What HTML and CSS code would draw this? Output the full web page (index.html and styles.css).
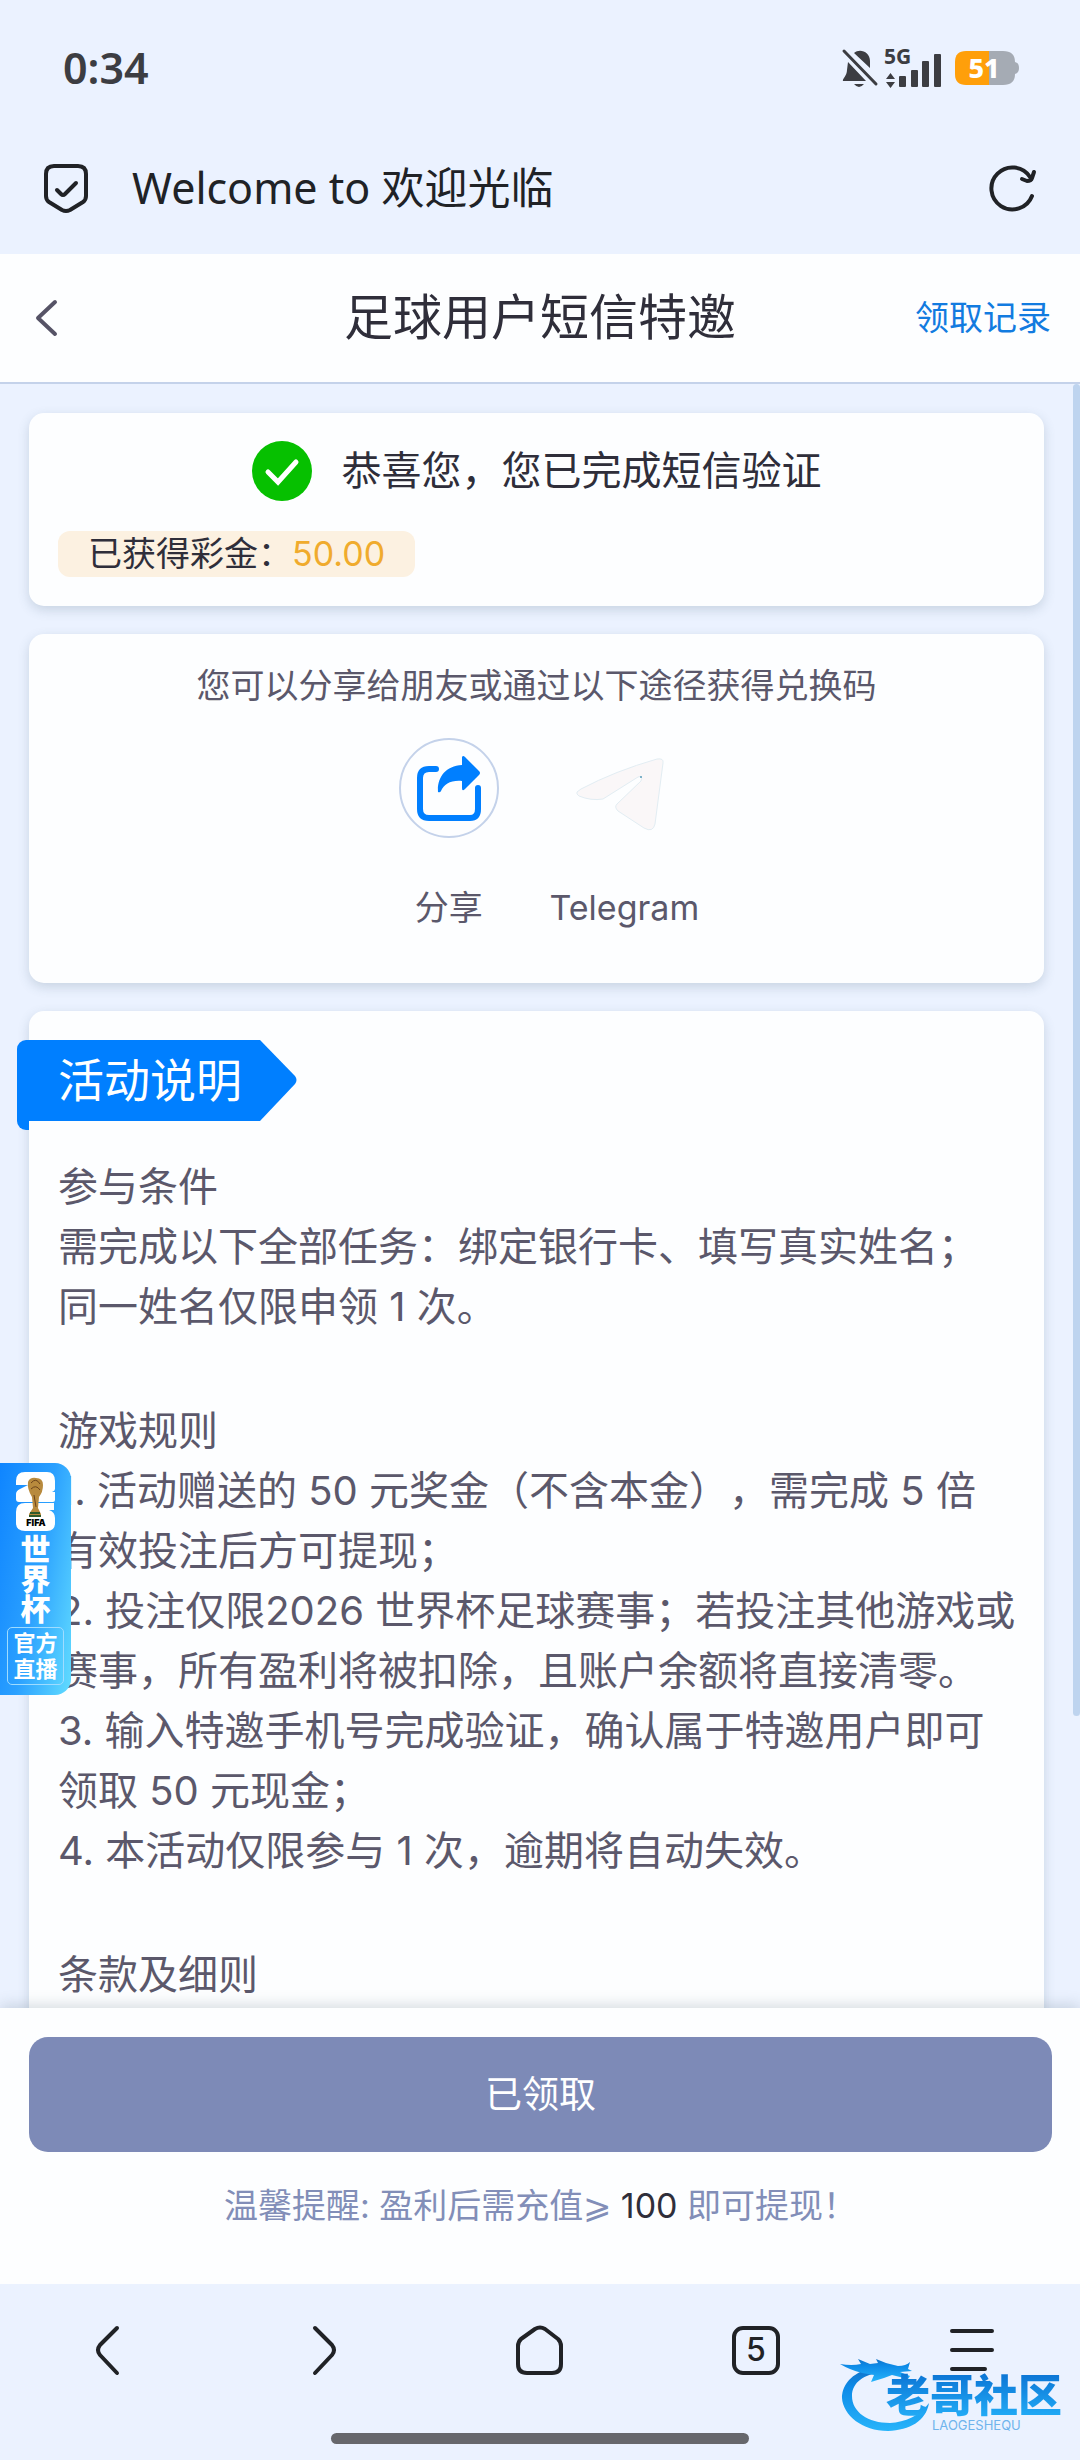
FILE: index.html
```html
<!DOCTYPE html>
<html lang="zh-CN">
<head>
<meta charset="utf-8">
<meta name="viewport" content="width=device-width, initial-scale=1.0">
<title>足球用户短信特邀</title>
<link rel="stylesheet" href="styles.css">
</head>
<body>
<div class="status-bar">
  <span class="clock">0:34</span>
  <div class="status-icons">
    <svg class="bell" width="36" height="40" viewBox="0 0 36 40">
      <path d="M12 5 C18 0 28 4 28 13 V20 Z M6 14 L24 33 H1 C0 31 5 28 5 22 Z M12 36 H22 Q17 42 12 36 Z" fill="#3c3d42"/>
      <path d="M2 3 L34 36" stroke="#3c3d42" stroke-width="3" stroke-linecap="round"/>
    </svg>
    <svg class="signal" width="58" height="40" viewBox="0 0 58 40" fill="#3c3d42">
      <text x="0" y="16" class="net-type">5G</text>
      <path d="M2 31 L6.500 25 L11 31 Z M2 34 H11 L6.500 40 Z"/>
      <rect x="15" y="28" width="7" height="11" rx="1"/>
      <rect x="27" y="22" width="7" height="17" rx="1"/>
      <rect x="38" y="13" width="7" height="26" rx="1"/>
      <rect x="50" y="6" width="7" height="33" rx="1"/>
    </svg>
    <svg class="battery" width="64" height="34" viewBox="0 0 64 34">
      <path d="M33 0 H48 Q60 0 60 11 Q64 12 64 17 Q64 22 60 23 Q60 34 48 34 H33 Z" fill="#a5abb4"/>
      <path d="M34 0 H11 Q0 0 0 11 V23 Q0 34 11 34 H34 Z" fill="#ff9f0a"/>
      <text x="29" y="27" class="battery-level">51</text>
    </svg>
  </div>
</div>

<div class="browser-bar">
  <svg width="46" height="50" viewBox="0 0 46 50" fill="none" stroke="#202226" stroke-width="4" stroke-linecap="round" stroke-linejoin="round">
    <path d="M11 3 H35 Q43 3 43 11 V33 Q43 37 40 39 L27 47 Q23 49 19 47 L6 39 Q3 37 3 33 V11 Q3 3 11 3 Z"/>
    <path d="M14 27 L18 31 Q20 33 22 31 L33 20"/>
  </svg>
  <span class="site-title">Welcome to 欢迎光临</span>
  <button class="icon-btn" aria-label="刷新">
    <svg width="48" height="48" viewBox="0 0 48 48" fill="none" stroke="#202226" stroke-width="4" stroke-linecap="round" stroke-linejoin="round">
      <path d="M43 32 A21 21 0 1 1 41 13"/>
      <path d="M33 15 L38 17 Q42 17 43 14 L45 8"/>
    </svg>
  </button>
</div>

<header class="page-header">
  <button class="icon-btn" aria-label="返回">
    <svg width="24" height="36" viewBox="0 0 24 36" fill="none" stroke="#565366" stroke-width="4" stroke-linecap="round" stroke-linejoin="round">
      <path d="M20 2 L3 18 L20 34"/>
    </svg>
  </button>
  <h1>足球用户短信特邀</h1>
  <a class="record-link" href="#">领取记录</a>
</header>

<main class="content">
  <section class="card">
    <div class="verified">
      <svg width="60" height="60" viewBox="0 0 60 60">
        <circle cx="30" cy="30" r="30" fill="#06c000"/>
        <path d="M16 31 L26 41 L44 21" fill="none" stroke="#fff" stroke-width="5" stroke-linecap="round"/>
      </svg>
      <h2>恭喜您，您已完成短信验证</h2>
    </div>
    <p class="bonus">已获得彩金：<span class="amount">50.00</span></p>
  </section>

  <section class="card share-card">
    <p>您可以分享给朋友或通过以下途径获得兑换码</p>
    <div class="share-list">
      <a class="share-item" href="#">
        <svg width="100" height="100" viewBox="0 0 100 100">
          <circle cx="50" cy="50" r="49" fill="none" stroke="#c4d2ea" stroke-width="2"/>
          <path d="M37 31 H30 Q21 31 21 40 V71 Q21 80 30 80 H71 Q79 80 79 71 V50" fill="none" stroke="#007fff" stroke-width="6" stroke-linecap="round"/>
          <path d="M63 19 Q64 17 66 19 L80 33 Q82 35 80 37 L66 51 Q63 54 63 50 V43 C52 42 45 46 42 53 Q41 55 39 54 C38 40 46 28 63 27 Z" fill="#007fff"/>
        </svg>
        <span>分享</span>
      </a>
      <a class="share-item" href="#">
        <svg width="100" height="100" viewBox="0 0 100 100">
          <path d="M3 54 Q2 56 5 58 Q17 63 29 61 L64 39 Q69 37 67 43 L43 66 Q40 69 44 73 L70 90 Q79 95 81 86 L89 25 Q90 20 83 21 Q41 33 7 51 Z" fill="#faf7f8" stroke="#e2edf3" stroke-width="1"/>
          <circle cx="67" cy="39" r="1" fill="#5a9cba"/>
        </svg>
        <span>Telegram</span>
      </a>
    </div>
  </section>

  <section class="card rules-card">
    <h2 class="ribbon">
      活动说明
      <svg class="ribbon-tip" width="38" height="81" viewBox="0 0 38 81">
        <path d="M0 0 H1 L36 36 Q39 40 36 44 L1 81 H0 Z" fill="#007fff"/>
      </svg>
    </h2>
    <div class="rules">
      <p>参与条件<br>
      需完成以下全部任务：绑定银行卡、填写真实姓名；<br>
      同一姓名仅限申领 1 次。</p>
      <p>游戏规则<br>
      1. 活动赠送的 50 元奖金（不含本金），需完成 5 倍<br>
      有效投注后方可提现；<br>
      2. 投注仅限2026 世界杯足球赛事；若投注其他游戏或<br>
      赛事，所有盈利将被扣除，且账户余额将直接清零。<br>
      3. 输入特邀手机号完成验证，确认属于特邀用户即可<br>
      领取 50 元现金；<br>
      4. 本活动仅限参与 1 次，逾期将自动失效。</p>
      <p>条款及细则</p>
    </div>
  </section>

  <div class="scroll-thumb"></div>

  <a class="live-badge" href="#">
    <svg width="40" height="60" viewBox="0 0 40 60">
      <path d="M9 0 H31 Q39 0 39 9 V17 Q39 19 36 20 H39 V28 Q39 30 37 30 H3 Q0 30 0 27 V22 Q0 19 4 17 L12 13 H0 V9 Q0 0 9 0 Z" fill="#fff"/>
      <path d="M9 31 H38 V38 H28 H33 Q39 40 39 46 V51 Q39 59 31 59 H9 Q0 59 0 51 V40 Q0 31 9 31 Z" fill="#fff"/>
      <path d="M12 10 Q14 5 20 6 Q27 6 27 13 Q27 20 23 25 L22 36 L25 42 V45 H13 V42 L17 36 L16 25 Q11 17 12 10 Z" fill="#b88a3d"/>
      <path d="M15 11 Q20 5 24 12 M15 17 Q20 12 24 18 M18 23 L20 35" fill="none" stroke="#6b431b" stroke-width="1"/>
      <path d="M14 41 H24 M13 44 H25" stroke="#2f5b2c" stroke-width="2"/>
      <text x="20" y="54" class="fifa">FIFA</text>
    </svg>
    <span class="live-title">世<br>界<br>杯</span>
    <span class="live-tag">官方<br>直播</span>
  </a>
</main>

<footer class="claim-panel">
  <button class="claim-btn">已领取</button>
  <p class="tip">温馨提醒: 盈利后需充值⩾ <b>100</b> 即可提现！</p>
</footer>

<nav class="browser-nav">
  <div class="nav-row">
    <button class="icon-btn" aria-label="后退">
      <svg width="50" height="50" viewBox="0 0 50 50"><path d="M34 3 L17 20 Q13 25 17 30 L34 48"/></svg>
    </button>
    <button class="icon-btn" aria-label="前进">
      <svg width="50" height="50" viewBox="0 0 50 50"><path d="M16 3 L33 20 Q37 25 33 30 L16 48"/></svg>
    </button>
    <button class="icon-btn" aria-label="主页">
      <svg width="50" height="50" viewBox="0 0 50 50"><path d="M20 4 Q25 1 30 4 L43 14 Q46 17 46 21 V39 Q46 48 37 48 H12 Q3 48 3 39 V21 Q3 17 6 14 Z"/></svg>
    </button>
    <button class="icon-btn" aria-label="标签页">
      <svg width="50" height="50" viewBox="0 0 50 50"><rect x="3" y="3" width="44" height="45" rx="9"/><text x="25" y="36" class="tab-count">5</text></svg>
    </button>
    <button class="icon-btn" aria-label="菜单">
      <svg width="50" height="50" viewBox="0 0 50 50"><path d="M5 6 H45 M5 25 H45 M5 44 H38"/></svg>
    </button>
  </div>
  <div class="home-indicator"></div>
  <div class="watermark">
    <svg width="96" height="78" viewBox="0 0 96 78">
      <defs>
        <linearGradient id="dragon" x1="0" y1="0" x2="0" y2="1">
          <stop offset="0" stop-color="#1273c9"/>
          <stop offset="0.3" stop-color="#0d8be8"/>
          <stop offset="1" stop-color="#27b4fa"/>
        </linearGradient>
      </defs>
      <path d="M28 14 C8 20 2 33 2 43 C3 60 22 76 48 76 C70 75 86 66 89 48 C80 61 65 67 50 68 C28 68 12 57 12 41 C12 27 25 19 40 18 Z" fill="url(#dragon)"/>
      <path d="M0 9 Q12 11 21 9 L18 4 L30 9 L38 8 L36 4 L46 8 L58 11 Q66 11 70 7 L68 14 L72 16 L60 17 L70 21 L68 24 L52 20 L44 23 L31 27 L34 20 L22 18 Q10 15 0 9 Z" fill="url(#dragon)"/>
    </svg>
    <div class="watermark-text">
      <strong>老哥社区</strong>
      <small>LAOGESHEQU</small>
    </div>
  </div>
</nav>
</body>
</html>
```
FILE: styles.css
```css
* {
  box-sizing: border-box;
}
body {
  margin: 0;
  height: 100vh;
  display: flex;
  flex-direction: column;
  overflow: hidden;
  background: #ebf2ff;
  color: #2f2e3a;
  font-family: Inter, "Noto Sans CJK SC", sans-serif;
  font-size: 34px;
  line-height: 48px;
  text-spacing-trim: space-all;
}
h1, h2, p {
  margin: 0;
  font-weight: 400;
}
a {
  color: inherit;
  text-decoration: none;
}
button {
  font-family: inherit;
  border: 0;
  padding: 0;
}
svg {
  display: block;
  flex: none;
  overflow: visible;
}
.icon-btn {
  background: none;
  display: flex;
  justify-content: center;
  align-items: center;
}

/* 状态栏 */
.status-bar {
  display: flex;
  justify-content: space-between;
  align-items: center;
  height: 136px;
  padding: 0 61px 0 63px;
  flex: none;
}
.clock {
  font-family: "Noto Sans", sans-serif;
  font-size: 43px;
  font-weight: 600;
  color: #3c3d42;
}
.status-icons {
  display: flex;
  align-items: center;
}
.bell {
  margin-right: 6px;
}
.signal {
  margin-right: 13px;
}
.net-type {
  font-family: "Noto Sans", sans-serif;
  font-size: 21px;
  font-weight: 700;
}
.battery-level {
  font-family: "Noto Sans", sans-serif;
  font-size: 27px;
  font-weight: 800;
  fill: #fff;
  text-anchor: middle;
}

/* 浏览器地址栏 */
.browser-bar {
  display: flex;
  align-items: center;
  height: 118px;
  padding: 0 43px 14px 43px;
  flex: none;
}
.site-title {
  flex: 1;
  margin-left: 43px;
  font-family: "Noto Sans", "Noto Sans CJK SC", sans-serif;
  font-size: 43px;
  color: #202226;
}

/* 页面标题 */
.page-header {
  display: grid;
  grid-template-columns: 1fr auto 1fr;
  align-items: center;
  height: 130px;
  padding: 0 29px;
  background: #fdfeff;
  border-bottom: 2px solid #c4d2ea;
  flex: none;
}
.page-header .icon-btn {
  justify-self: start;
  padding-left: 6px;
}
.page-header h1 {
  font-size: 49px;
}
.record-link {
  justify-self: end;
  color: #127be0;
}

/* 内容区 */
.content {
  position: relative;
  flex: 1;
  min-height: 0;
  overflow: hidden;
  display: flex;
  flex-direction: column;
  gap: 28px;
  padding: 29px 36px 0 29px;
}
.card {
  flex: none;
  padding: 28px 29px 29px;
  background: #fdfeff;
  border-radius: 15px;
  box-shadow: 0 4px 12px rgba(60, 90, 110, 0.2);
}
.verified {
  display: flex;
  justify-content: center;
  align-items: center;
  gap: 30px;
  margin-bottom: 30px;
}
.verified h2 {
  font-size: 40px;
}
.bonus {
  width: fit-content;
  padding: 0 30px;
  line-height: 46px;
  background: #fcf1e1;
  border-radius: 12px;
}
.amount {
  color: #f0ab2d;
}

.share-card {
  padding-bottom: 51px;
  text-align: center;
  color: #5b586b;
}
.share-list {
  display: grid;
  grid-template-columns: 1fr 1fr;
  gap: 26px;
  width: max-content;
  margin: 28px auto 0;
}
.share-item {
  display: flex;
  flex-direction: column;
  align-items: center;
  gap: 46px;
}

.rules-card {
  padding-top: 29px;
}
.ribbon {
  position: relative;
  width: fit-content;
  margin-left: -41px;
  padding: 0 17px 0 41px;
  font-size: 46px;
  line-height: 81px;
  color: #fff;
  background: #007fff;
  border-top-left-radius: 9px;
}
/* 丝带左侧折角 */
.ribbon::before {
  content: "";
  position: absolute;
  left: 0;
  top: 100%;
  width: 12px;
  height: 9px;
  background: #007fff;
  border-bottom-left-radius: 9px;
}
.ribbon-tip {
  position: absolute;
  left: 100%;
  top: 0;
}
.rules {
  display: flex;
  flex-direction: column;
  gap: 64px;
  margin-top: 36px;
  font-size: 40px;
  line-height: 60px;
  color: #5b586b;
  white-space: nowrap;
}

.scroll-thumb {
  position: absolute;
  top: 0;
  right: 0;
  width: 7px;
  height: 82%;
  background: #bed4ef;
  border-radius: 4px;
}

/* 左侧悬浮入口 */
.live-badge {
  position: absolute;
  left: 0;
  top: 1079px;
  display: flex;
  flex-direction: column;
  align-items: center;
  width: 71px;
  padding: 9px 0 10px;
  background: linear-gradient(100deg, #0f85ff, #2aa0ff 50%, #62dcff);
  border-radius: 0 16px 16px 0;
  color: #fff;
  font-weight: 700;
  text-align: center;
}
.fifa {
  font-size: 9px;
  font-weight: 900;
  text-anchor: middle;
}
.live-title {
  margin: 2px 0 3px;
  font-size: 30px;
  font-weight: 900;
  line-height: 30px;
}
.live-tag {
  padding: 2px 5px;
  border: 1px solid #9fdcff;
  border-radius: 5px;
  font-size: 22px;
  line-height: 26px;
}

/* 底部领取区 */
.claim-panel {
  position: relative;
  flex: none;
  padding: 29px 28px 54px 29px;
  background: #fdfeff;
  box-shadow: 0 -3px 14px rgba(60, 80, 100, 0.2);
}
.claim-btn {
  display: block;
  width: 100%;
  height: 115px;
  padding-bottom: 6px;
  font-size: 37px;
  color: #fff;
  background: #7d8ab7;
  border-radius: 19px;
}
.tip {
  margin-top: 30px;
  text-align: center;
  color: #828eb8;
}
.tip b {
  font-weight: 400;
  color: #2f2e3a;
}

/* 浏览器导航 */
.browser-nav {
  position: relative;
  flex: none;
  height: 176px;
  padding-top: 41px;
  background: #ebf2ff;
}
.nav-row {
  display: grid;
  grid-template-columns: repeat(5, 1fr);
}
.nav-row svg {
  fill: none;
  stroke: #202226;
  stroke-width: 4px;
  stroke-linecap: round;
  stroke-linejoin: round;
}
.nav-row .tab-count {
  fill: #202226;
  stroke: none;
  font-size: 32px;
  font-weight: 500;
  text-anchor: middle;
}
.home-indicator {
  width: 418px;
  height: 11px;
  margin: 58px auto 0;
  background: #66676c;
  border-radius: 6px;
}
.watermark {
  position: absolute;
  right: 18px;
  bottom: 27px;
  display: flex;
  align-items: flex-end;
}
.watermark-text {
  display: flex;
  flex-direction: column;
  margin-left: -50px;
  padding-bottom: 2px;
}
.watermark strong {
  font-size: 44px;
  font-weight: 900;
  line-height: 46px;
  color: transparent;
  background: linear-gradient(#0b74d4, #23aef8);
  background-clip: text;
}
.watermark small {
  margin-left: 46px;
  font-size: 13px;
  line-height: 12px;
  color: #6fb4ec;
}
```
